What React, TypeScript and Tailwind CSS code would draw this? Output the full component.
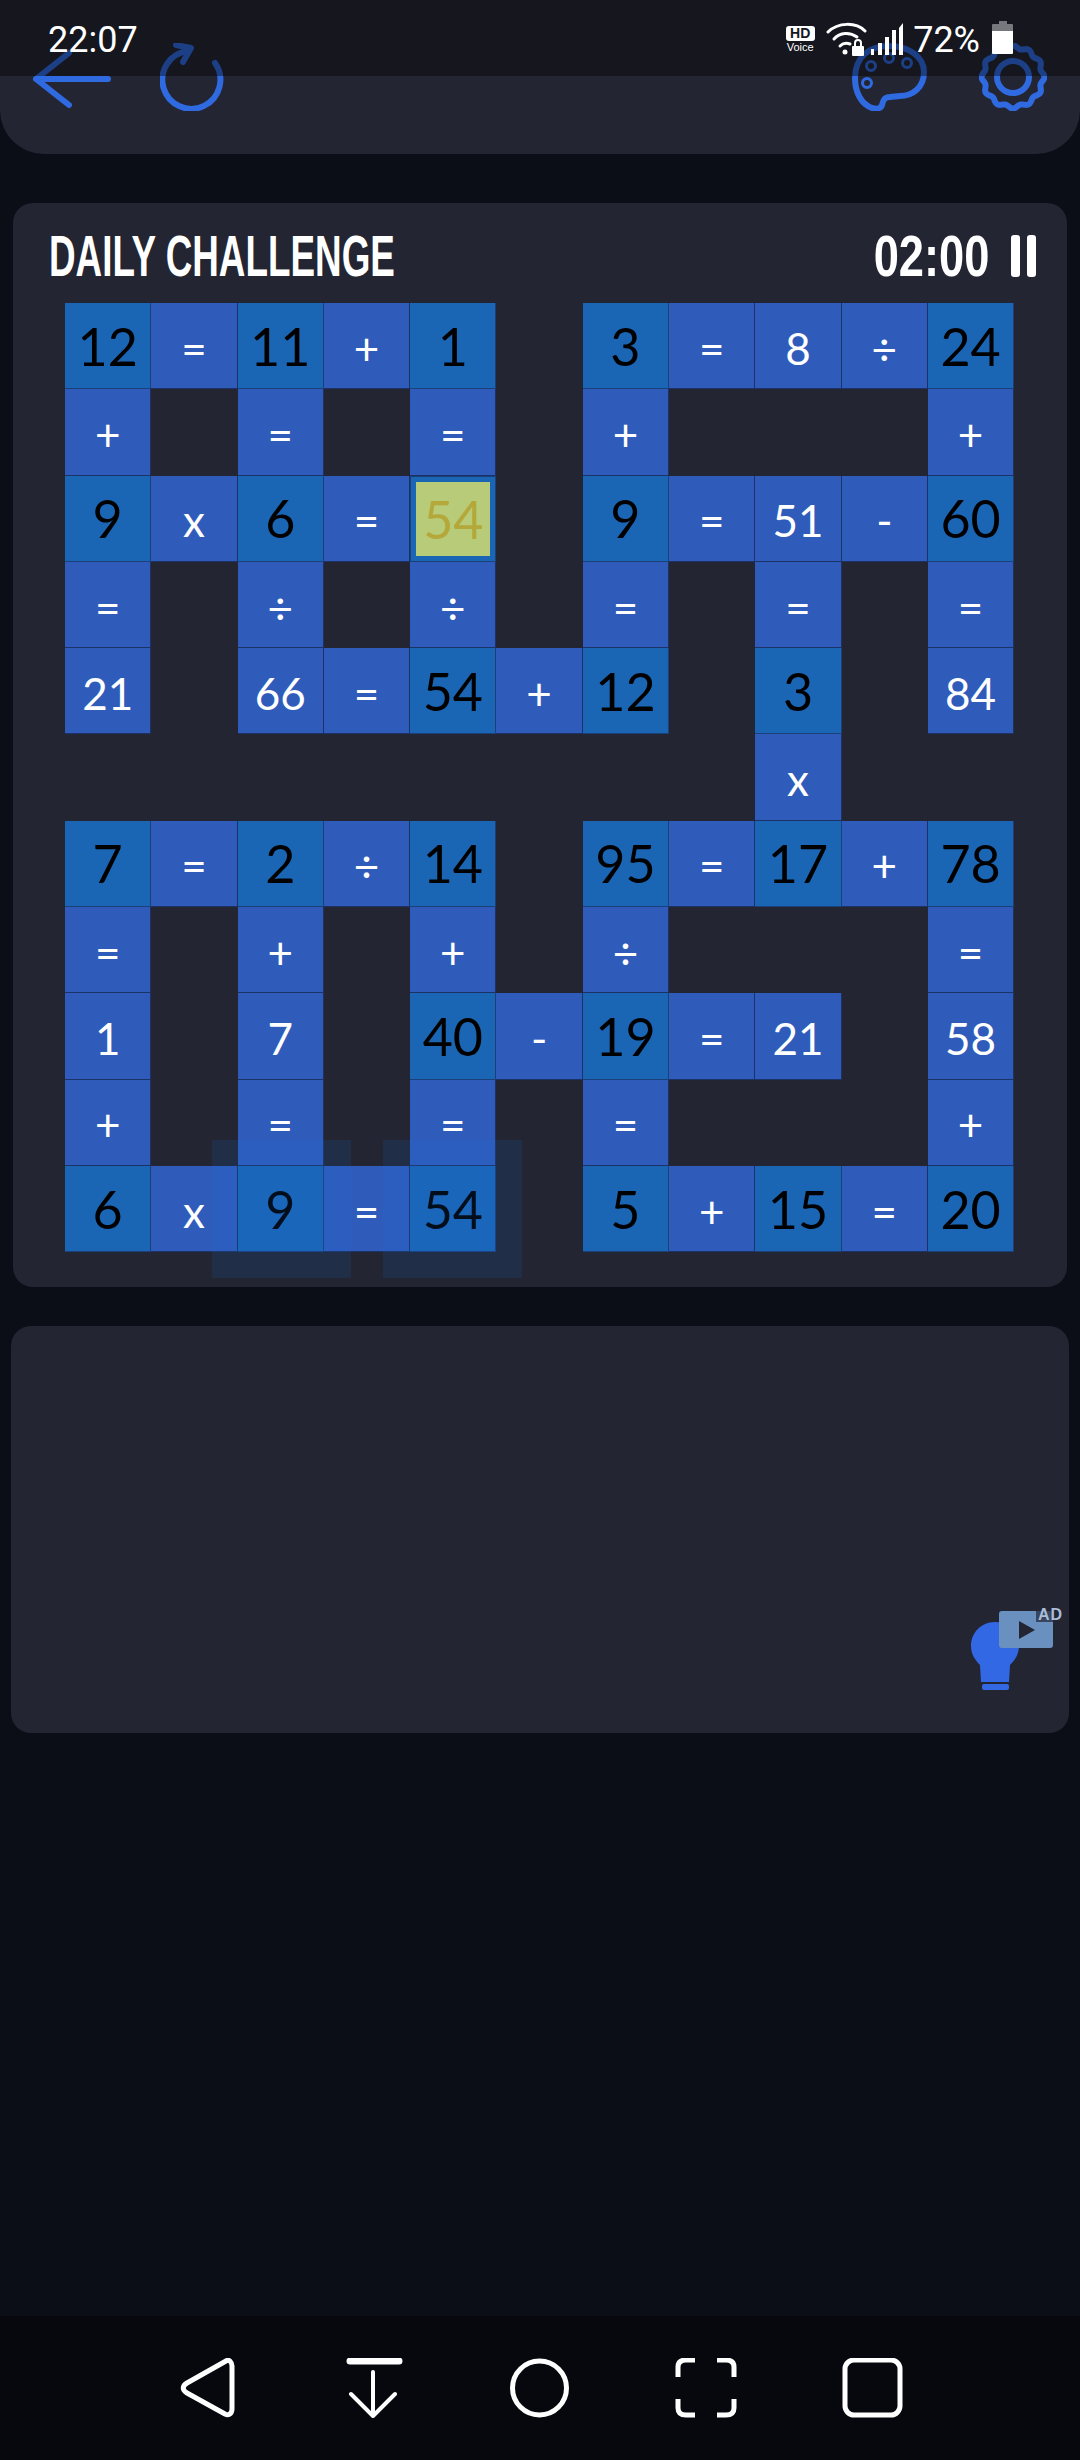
import React from "react";

const rows = [
  "#12 = #11 + #1 . #3 = 8 ÷ #24",
  "+ . = . = . + . . . +",
  "#9 x #6 = @54 . #9 = 51 - #60",
  "= . ÷ . ÷ . = . = . =",
  "21 . 66 = #54 + #12 . #3 . 84",
  ". . . . . . . . x . .",
  "#7 = #2 ÷ #14 . #95 = #17 + #78",
  "= . + . + . ÷ . . . =",
  "1 . 7 . #40 - #19 = 21 . 58",
  "+ . = . = . = . . . +",
  "#6 x #9 = #54 . #5 + #15 = #20",
];

const Cell = ({ value }: { value: string }) => {
  if (value === ".") return <div />;
  if (value.startsWith("@")) {
    return (
      <div className="border border-[#1b3f78] bg-[#1a66b5] p-[5px]">
        <div className="flex h-full items-center justify-center bg-[#b7cb78] text-[52px] text-[#b5a83a]">
          {value.slice(1)}
        </div>
      </div>
    );
  }
  if (value.startsWith("#")) {
    return (
      <div className="flex items-center justify-center border-r border-b border-[#1b3f78] bg-[#1a66b5] text-[52px] text-black">
        {value.slice(1)}
      </div>
    );
  }
  return (
    <div className="flex items-center justify-center border-r border-b border-[#1c3266] bg-[#2f5cbb] pt-[4px] text-[44px] text-white">
      {value}
    </div>
  );
};

const gearPoints = Array.from({ length: 144 }, (_, i) => {
  const a = (i / 144) * Math.PI * 2;
  const r = 30 + 1.5 * Math.cos(a * 12);
  return `${(34 + r * Math.cos(a)).toFixed(1)},${(34 + r * Math.sin(a)).toFixed(1)}`;
}).join(" ");

const Header = () => (
  <div className="flex h-[154px] shrink-0 items-start justify-between rounded-b-[44px] bg-[#232532] pt-[43px] pr-[33px] pl-[32px]">
    <div className="flex items-start gap-[46px]">
      <svg width="82" height="68" viewBox="0 0 82 68" fill="none" stroke="#2f6ae0" strokeWidth="6" strokeLinecap="round" strokeLinejoin="round">
        <path d="M4 36H76M37 10L4 36L37 62" />
      </svg>
      <svg width="72" height="68" viewBox="0 0 72 68" fill="none" stroke="#2f6ae0" strokeWidth="6" strokeLinecap="round" strokeLinejoin="round">
        <path d="M55 20A29 29 0 1 1 28 8" />
        <path d="M16 2L31 5L23 19" />
      </svg>
    </div>
    <div className="flex items-start gap-[49px]">
      <svg width="78" height="68" viewBox="855 43 78 68" fill="none" stroke="#2f6ae0" strokeWidth="6" strokeLinecap="round" strokeLinejoin="round">
        <path d="M858 78C858 57 872 46 892 46C912 46 927 57 927 72C927 88 915 96 903 96L893 97C887 97 886 101 885 105C884 109 879 109 875 108C864 104 858 92 858 78Z" />
        <g strokeWidth="3">
          <circle cx="874" cy="66" r="4.5" />
          <circle cx="892" cy="58" r="4.5" />
          <circle cx="910" cy="63" r="4.5" />
          <circle cx="870" cy="83" r="4.5" />
        </g>
      </svg>
      <svg width="68" height="68" viewBox="0 0 68 68" fill="none" stroke="#2f6ae0" strokeWidth="6" strokeLinejoin="round">
        <polygon points={gearPoints} />
        <circle cx="34" cy="34" r="16" />
      </svg>
    </div>
  </div>
);

const StatusBar = () => (
  <div className="absolute inset-x-0 top-0 flex h-[76px] items-start justify-between bg-black/40 pt-[21px] pr-[67px] pl-[48px] font-['Roboto',sans-serif] text-white">
    <span className="text-[36px] leading-[38px]">22:07</span>
    <div className="flex items-start">
      <div className="mt-[5px] flex w-[30px] flex-col items-center font-['Liberation_Sans',sans-serif]">
        <span className="h-[15px] w-[29px] rounded-[3px] bg-white text-center text-[14px] leading-[15px] font-bold text-[#15161f]">HD</span>
        <span className="text-[11px] leading-[12px]">Voice</span>
      </div>
      <svg className="mt-[1px] ml-[11px]" width="42" height="34" viewBox="0 0 42 34" fill="none" stroke="#fff" strokeWidth="3" strokeLinecap="round">
        <path d="M2 10C12 0 30 0 39 9" />
        <path d="M8 17C14 10 24 10 31 15" />
        <path d="M14 24C17 21 21 21 24 22" />
        <circle cx="19" cy="30" r="2.5" fill="#fff" stroke="none" />
        <rect x="26" y="24" width="12" height="10" rx="1" fill="#fff" stroke="none" />
        <path d="M29 24V21A3 3 0 0 1 35 21V24" strokeWidth="2" />
      </svg>
      <svg className="mt-[1px] ml-[3px]" width="32" height="33" viewBox="0 0 32 33" fill="#fff">
        <rect x="0" y="27" width="3" height="6" />
        <rect x="7" y="21" width="4" height="12" />
        <rect x="14" y="15" width="4" height="18" />
        <rect x="21" y="8" width="4" height="25" />
        <polygon points="28,6 32,1 32,33 28,33" />
      </svg>
      <span className="ml-[10px] text-[36px] leading-[38px]">72%</span>
      <div className="ml-[12px] flex w-[21px] flex-col items-center">
        <div className="h-[3px] w-[8px] bg-[#77787d]" />
        <div className="h-[7px] w-[21px] rounded-t-[1px] bg-[#77787d]" />
        <div className="h-[23px] w-[21px] rounded-b-[1px] bg-white" />
      </div>
    </div>
  </div>
);

const PuzzleCard = () => (
  <div className="relative mx-[13px] mt-[49px] h-[1084px] shrink-0 rounded-[20px] bg-[#232532] pl-[52px]">
    <div className="flex h-[100px] items-start justify-between pt-[24px] pr-[31px] font-['Liberation_Sans',sans-serif] font-bold text-white">
      <span className="-ml-[16px] inline-block origin-left scale-x-[0.635] text-[58px] leading-[58px]">DAILY CHALLENGE</span>
      <div className="flex items-center gap-[22px]">
        <span className="inline-block origin-right scale-x-[0.78] text-[58px] leading-[58px]">02:00</span>
        <div className="flex gap-[7px]">
          <div className="h-[42px] w-[9px] rounded-[3px] bg-white" />
          <div className="h-[42px] w-[9px] rounded-[3px] bg-white" />
        </div>
      </div>
    </div>
    <div className="grid grid-cols-[repeat(11,86.3px)] auto-rows-[86.3px] font-['Lato',sans-serif]">
      {rows.flatMap((row, r) => row.split(" ").map((value, c) => <Cell key={`${r}-${c}`} value={value} />))}
    </div>
    <div className="absolute top-[937px] left-[199px] h-[138px] w-[139px] bg-[#1a6ee0]/[0.13]" />
    <div className="absolute top-[937px] left-[370px] h-[138px] w-[139px] bg-[#1a6ee0]/[0.13]" />
  </div>
);

const HintCard = () => (
  <div className="relative mx-[11px] mt-[39px] flex h-[407px] shrink-0 rounded-[20px] bg-[#232532]">
    <svg className="absolute top-[296px] left-[960px]" width="48" height="68" viewBox="0 0 48 68" fill="#3268e3">
      <path d="M24 0C10 0 0 11 0 24C0 33 5 39 9 43L10 60H38L39 43C44 38 48 32 48 24C48 11 38 0 24 0Z" />
      <rect x="11" y="62" width="27" height="6" rx="2" />
    </svg>
    <div className="absolute top-[285px] left-[988px] flex h-[37px] w-[54px] items-center justify-center rounded-[3px] bg-[#6a90c0]">
      <svg width="17" height="18" viewBox="0 0 17 18" fill="#232532">
        <polygon points="1,0 17,9 1,18" />
      </svg>
    </div>
    <span className="absolute top-[281px] left-[1025px] bg-[#232532]/70 px-[2px] font-['Liberation_Sans',sans-serif] text-[16px] leading-[15px] font-bold tracking-[1px] text-[#a9bdd8]">AD</span>
  </div>
);

const NavBar = () => (
  <div className="flex h-[144px] shrink-0 items-start justify-center bg-[#06080d] pt-[42px]">
    <svg width="1080" height="60" viewBox="0 2358 1080 60" fill="none" stroke="#fff" strokeWidth="5" strokeLinecap="round" strokeLinejoin="round">
      <path d="M226 2361C229 2359 232 2362 232 2366V2409C232 2414 228 2416 225 2414L187 2393C182 2390 182 2386 187 2383Z" />
      <path d="M350 2361H399" strokeWidth="7" />
      <path d="M373 2372V2415M351 2394L373 2416L395 2394" strokeWidth="4" />
      <circle cx="539.5" cy="2388" r="27" />
      <path d="M678 2377V2367C678 2362 681 2360 686 2360H695M717 2360H726C731 2360 734 2362 734 2367V2377M734 2399V2408C734 2413 731 2415 726 2415H717M695 2415H686C681 2415 678 2413 678 2408V2399" strokeLinecap="butt" />
      <rect x="845" y="2360" width="55" height="55" rx="9" />
    </svg>
  </div>
);

export default function App() {
  return (
    <div className="relative flex h-[2460px] w-[1080px] flex-col overflow-hidden bg-[#0b0e16]">
      <Header />
      <PuzzleCard />
      <HintCard />
      <div className="flex-1" />
      <NavBar />
      <StatusBar />
    </div>
  );
}
